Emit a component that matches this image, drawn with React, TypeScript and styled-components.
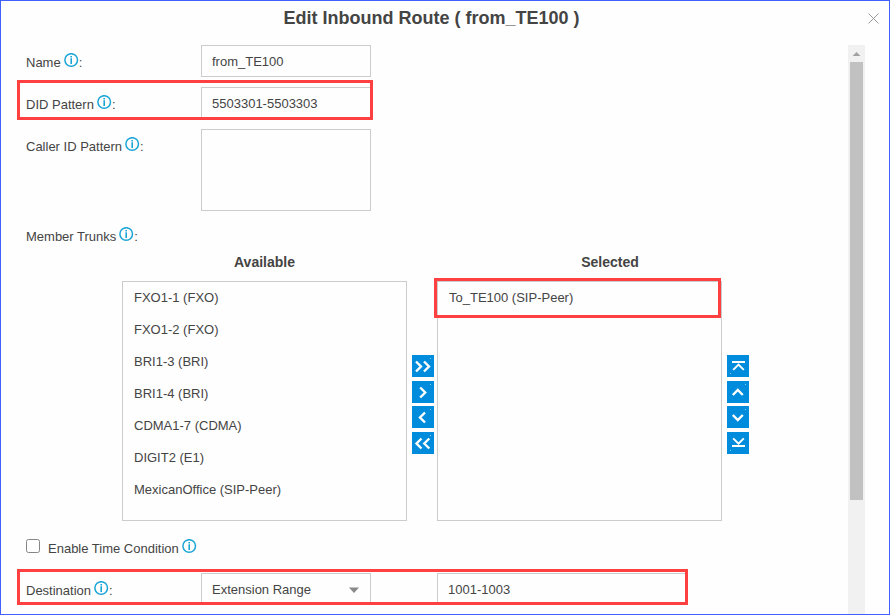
import React from "react";
import styled, { createGlobalStyle, css } from "styled-components";

const GlobalStyle = createGlobalStyle`
  * { box-sizing: border-box; }
  body { margin: 0; background: #fff; overflow: hidden; }
`;

const Dialog = styled.div`
  display: flex;
  flex-direction: column;
  width: 890px;
  height: 615px;
  border: 1px solid #4060ff;
  background: #fefefe;
  color: #444;
  font: 13px/16px "Liberation Sans", Arial, sans-serif;
  overflow: hidden;
`;

const Header = styled.header`
  display: grid;
  grid-template-columns: 861px 1fr;
  flex: none;
  height: 44px;
`;

const Title = styled.h1`
  margin: 6px 0 0;
  font-size: 18px;
  line-height: 22px;
  font-weight: bold;
  text-align: center;
`;

const CloseButton = styled.button`
  display: block;
  width: 23px;
  height: 23px;
  margin-top: 6px;
  padding: 6px;
  border: 0;
  background: none;
`;

const Body = styled.div`
  display: flex;
  flex: 1;
  min-height: 0;
  padding-right: 24px;
`;

const Form = styled.form`
  flex: 1;
  padding-left: 25px;
  overflow: hidden;
`;

const Row = styled.div<{ $height?: number; $gap?: number }>`
  position: relative;
  display: flex;
  height: ${(p) => p.$height ?? 32}px;
  margin-bottom: ${(p) => p.$gap ?? 10}px;
`;

const Label = styled.label`
  display: flex;
  width: 175px;
  height: 32px;
  padding-top: 10px;
  white-space: pre;
`;

const InfoMark = styled.svg`
  display: block;
  flex: none;
  width: 15px;
  height: 15px;
  margin: -2px 0 0 3px;
`;

const field = css`
  height: 32px;
  padding: 0 10px;
  border: 1px solid #ccc;
  border-radius: 0;
  outline: 0;
  background: #fefefe;
  color: #444;
  font: inherit;
`;

const TextInput = styled.input<{ $width?: number }>`
  ${field}
  width: ${(p) => p.$width ?? 170}px;
`;

const TextArea = styled.textarea`
  ${field}
  width: 170px;
  height: 82px;
  resize: none;
`;

const Select = styled.div`
  ${field}
  display: flex;
  align-items: center;
  justify-content: space-between;
  width: 170px;
  margin-right: 66px;
  padding-top: 2px;
`;

const Caret = styled.svg`
  width: 10px;
  height: 6px;
  margin: 0 1px 1px 0;
`;

const Highlight = styled.div<{ $left: number; $top: number; $width: number; $height: number }>`
  position: absolute;
  left: ${(p) => p.$left}px;
  top: ${(p) => p.$top}px;
  width: ${(p) => p.$width}px;
  height: ${(p) => p.$height}px;
  border: 3px solid #ff4040;
  pointer-events: none;
`;

const Transfer = styled.div`
  display: grid;
  grid-template-columns: 285px 30px 285px 30px;
  grid-template-rows: 30px 240px;
  margin: 0 0 10px 96px;
`;

const ListTitle = styled.div<{ $column: number; $indent?: number }>`
  grid-row: 1;
  grid-column: ${(p) => p.$column};
  padding: 3px 0 0 ${(p) => p.$indent ?? 0}px;
  font-size: 14px;
  font-weight: bold;
  text-align: center;
`;

const List = styled.ul<{ $column: number }>`
  position: relative;
  grid-row: 2;
  grid-column: ${(p) => p.$column};
  margin: 0;
  padding: 0 11px;
  border: 1px solid #ccc;
  list-style: none;
`;

const ListItem = styled.li`
  height: 32px;
  line-height: 31px;
`;

const Buttons = styled.div<{ $column: number }>`
  grid-row: 2;
  grid-column: ${(p) => p.$column};
  display: grid;
  grid-template-rows: 26px 25px 26px 22px;
  align-content: start;
  padding: 74px 0 0 5px;
`;

const MoveButton = styled.button`
  width: 22px;
  height: 22px;
  padding: 0;
  border: 0;
  background: #008cdc;
  svg { display: block; }
`;

const Check = styled.input`
  appearance: none;
  flex: none;
  width: 14px;
  height: 14px;
  margin: -2px 8px 0 0;
  border: 1px solid #858585;
  border-radius: 2.5px;
  background: #fff;
`;

const Scrollbar = styled.div`
  width: 17px;
  background: #f1f1f1;
`;

const ScrollUp = styled.svg`
  display: block;
  width: 17px;
  height: 17px;
`;

const Thumb = styled.div`
  width: 13px;
  height: 438px;
  margin-left: 2px;
  background: #c1c1c1;
`;

const Info = () => (
  <InfoMark viewBox="0 0 15 15">
    <circle cx="7.2" cy="7" r="6.3" fill="none" stroke="#1ba5d6" strokeWidth="1.5" />
    <path d="M6.4 3h1.6v1.5H6.4zM6.4 5.3h1.6v5.6H6.4z" fill="#1ba5d6" />
  </InfoMark>
);

const trunks = [
  "FXO1-1 (FXO)",
  "FXO1-2 (FXO)",
  "BRI1-3 (BRI)",
  "BRI1-4 (BRI)",
  "CDMA1-7 (CDMA)",
  "DIGIT2 (E1)",
  "MexicanOffice (SIP-Peer)",
];

type Glyph = { name: string; d: string; bar?: string };

const transferGlyphs: Glyph[] = [
  { name: "Add all", d: "M4 6.5l5 5-5 5M12 6.5l5 5-5 5" },
  { name: "Add", d: "M8.2 6.5l5 5-5 5" },
  { name: "Remove", d: "M13 6.5l-5 5 5 5" },
  { name: "Remove all", d: "M9.5 6.5l-5 5 5 5M17.3 6.5l-5 5 5 5" },
];

const orderGlyphs: Glyph[] = [
  { name: "Move to top", d: "M6.2 14.8l5.3-5.3 5.3 5.3", bar: "M5 7h13" },
  { name: "Move up", d: "M5.8 14l5-5 5 5" },
  { name: "Move down", d: "M5.8 9l5 5 5-5" },
  { name: "Move to bottom", d: "M6.2 6.4l5.3 5.3 5.3-5.3", bar: "M5 14h13" },
];

const ButtonColumn = ({ glyphs, column }: { glyphs: Glyph[]; column: number }) => (
  <Buttons $column={column}>
    {glyphs.map((g) => (
      <MoveButton type="button" key={g.name} aria-label={g.name}>
        <svg width="22" height="22" fill="none" stroke="#fff">
          <path d={g.d} strokeWidth={g.bar ? 1.9 : 2.4} />
          {g.bar && <path d={g.bar} strokeWidth="2" />}
          <path d={g.bar ? "M3 18.5h1" : "M18 3.5h1"} strokeOpacity=".55" />
        </svg>
      </MoveButton>
    ))}
  </Buttons>
);

export default function App() {
  return (
    <>
      <GlobalStyle />
      <Dialog>
        <Header>
          <Title>Edit Inbound Route ( from_TE100 )</Title>
          <CloseButton aria-label="Close">
            <svg width="11" height="11" display="block" stroke="#999">
              <path d="M.5.5l10 10M10.5.5l-10 10" />
            </svg>
          </CloseButton>
        </Header>
        <Body>
          <Form>
            <Row>
              <Label>Name<Info />:</Label>
              <TextInput defaultValue="from_TE100" />
            </Row>
            <Row>
              <Label>DID Pattern<Info />:</Label>
              <TextInput defaultValue="5503301-5503303" />
              <Highlight $left={-9} $top={-7} $width={356} $height={40} />
            </Row>
            <Row $height={82} $gap={8}>
              <Label>Caller ID Pattern<Info />:</Label>
              <TextArea />
            </Row>
            <Row $gap={0}>
              <Label>Member Trunks<Info />:</Label>
            </Row>
            <Transfer>
              <ListTitle $column={1}>Available</ListTitle>
              <ListTitle $column={3} $indent={61}>Selected</ListTitle>
              <List $column={1}>
                {trunks.map((t) => <ListItem key={t}>{t}</ListItem>)}
              </List>
              <ButtonColumn glyphs={transferGlyphs} column={2} />
              <List $column={3}>
                <ListItem>To_TE100 (SIP-Peer)</ListItem>
                <Highlight $left={-4} $top={-4} $width={287} $height={40} />
              </List>
              <ButtonColumn glyphs={orderGlyphs} column={4} />
            </Transfer>
            <Row>
              <Label><Check type="checkbox" />Enable Time Condition<Info /></Label>
            </Row>
            <Row>
              <Label>Destination<Info />:</Label>
              <Select>
                Extension Range
                <Caret viewBox="0 0 10 6"><path d="M0 .5h10L5 6z" fill="#888" /></Caret>
              </Select>
              <TextInput $width={250} defaultValue="1001-1003" />
              <Highlight $left={-9} $top={-4} $width={671} $height={36} />
            </Row>
          </Form>
          <Scrollbar>
            <ScrollUp><path d="M4.6 11L8.5 7 12.4 11z" fill="#a0a0a0" /></ScrollUp>
            <Thumb />
          </Scrollbar>
        </Body>
      </Dialog>
    </>
  );
}
